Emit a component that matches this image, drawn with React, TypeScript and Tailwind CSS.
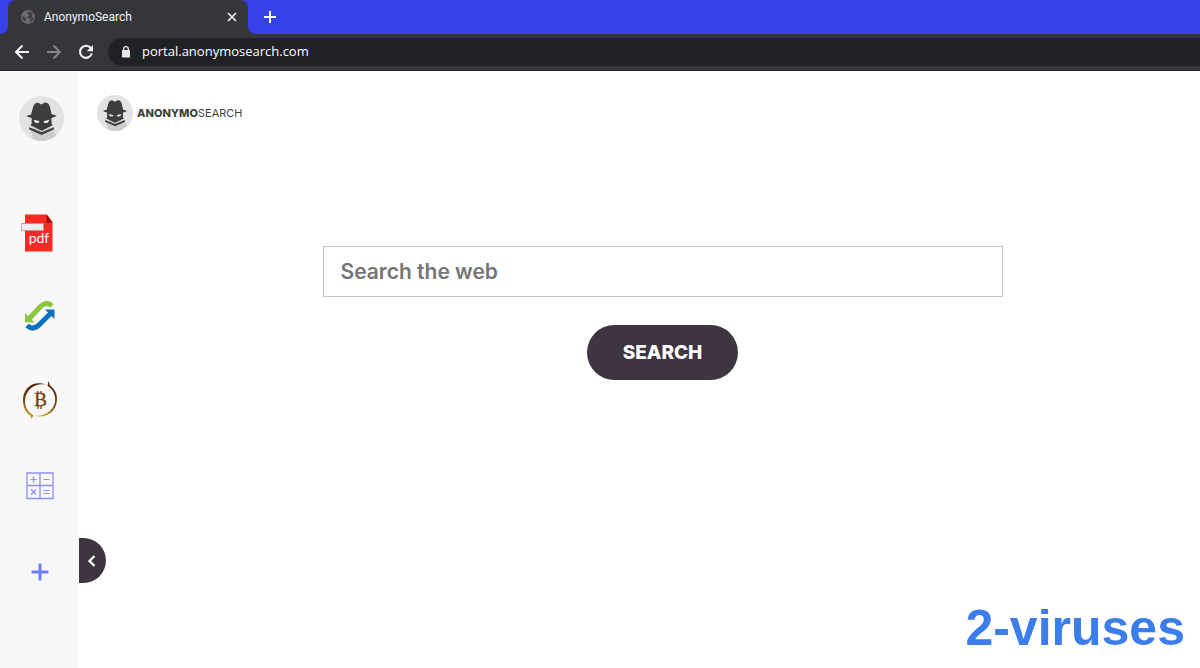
import React from "react";

function Detective({ className }: { className: string }) {
  return (
    <svg viewBox="0 0 135 135" className={className} aria-hidden="true">
      <circle cx="67.5" cy="67.5" r="67.5" fill="#e3e3e3" />
      <path d="M32 97 L103 97 L112 118 A67.5 67.5 0 0 1 42 130 Z" fill="#cccccc" />
      <path
        d="M22 60 Q30 56 36 56 L42 34 Q46 21 54 20 Q60 20 63 23 Q67 26 71 23 Q76 19 83 20 Q90 22 93 34 L98 55 Q106 56 113 60 Q98 69 67 69 Q37 69 22 60 Z"
        fill="#3d3d3d"
      />
      <path d="M38 64 L97 64 L98 84 L101 88 L68 104 L34 88 L38 84 Z" fill="#3d3d3d" />
      <path d="M44 71 L62 76 L58 81 L48 80 Z M91 71 L73 76 L77 81 L87 80 Z" fill="#f4f4f4" />
      <path d="M31 94 L68 109 L104 94 L105 100 L68 117 L30 100 Z" fill="#3d3d3d" />
    </svg>
  );
}

function PdfIcon() {
  return (
    <svg viewBox="0 0 32 38" className="mr-1.5 h-[38px] w-8" aria-hidden="true">
      <path d="M4 0.5 H26 L31.500 8 V37.500 H4 Z" fill="#f82a23" />
      <path d="M25.500 0.500 L31.500 8.500 H25.500 Z" fill="#9c0906" />
      <rect x="0.500" y="9.500" width="22" height="7" fill="#ececec" stroke="#c98c91" strokeWidth="0.800" />
      <text x="18" y="29" textAnchor="middle" fontFamily="Lato, sans-serif" fontSize="14" fill="#ffffff">
        pdf
      </text>
    </svg>
  );
}

function SyncIcon() {
  return (
    <svg viewBox="0 0 30 30" className="h-[30px] w-[30px]" aria-hidden="true">
      <path d="M4 18 L15 6 Q21.500 -0.500 27 5" fill="none" stroke="#8cc63f" strokeWidth="5" />
      <path d="M0 12 V21.500 H9.500 Z" fill="#8cc63f" />
      <path d="M2 24.500 Q8 30 14.500 23.500 L25.500 12.500" fill="none" stroke="#0872c2" strokeWidth="5" />
      <path d="M29.500 8.500 V18 L20 8.500 Z" fill="#0872c2" />
    </svg>
  );
}

function BitcoinIcon() {
  return (
    <svg viewBox="0 0 36 38" className="h-[38px] w-9" aria-hidden="true">
      <defs>
        <linearGradient id="gold" x1="0.600" y1="0" x2="0.300" y2="1">
          <stop offset="0" stopColor="#4a2208" />
          <stop offset="0.600" stopColor="#76410d" />
          <stop offset="1" stopColor="#d7a414" />
        </linearGradient>
      </defs>
      <path
        fill="url(#gold)"
        d="M24 3.500 C10 -1 1 8 1 19 C1 26 4 32 8.500 34.500 L9.500 38 L11.500 34.300 C5 31 2.600 25 3.100 19 C4 9 12 1.500 24 3.500 Z"
      />
      <path
        fill="url(#gold)"
        d="M26.500 0 L28 4.500 C34 9 36 15 34.500 22 C32.500 31 24 38 12 34.500 C24 36 31.500 29 33 21 C34 14 31 8 25.500 5 Z"
      />
      <text x="18.500" y="25" textAnchor="middle" fontFamily="Liberation Serif, serif" fontSize="19" fill="#76400f" stroke="#76400f" strokeWidth="0.400">
        B
      </text>
      <path d="M16 10 V13 M19 10 V13 M16 25 V28 M19 25 V28" stroke="#76400f" strokeWidth="1.300" />
    </svg>
  );
}

function CalculatorIcon() {
  return (
    <svg viewBox="0 0 28 28" className="h-7 w-7" fill="none" stroke="#8990fb" aria-hidden="true">
      <path d="M1 1 H27 V26.500 H1 Z M14 1 V26.500 M1 13.500 H27" strokeWidth="1.300" />
      <path d="M4.500 7.500 H10.500 M7.500 4.500 V10.500 M17.500 7.500 H23.500 M5 17.500 L10 22.500 M10 17.500 L5 22.500 M17.500 18.500 H23.500 M17.500 21.500 H23.500" strokeWidth="1.200" />
    </svg>
  );
}

function BrowserChrome() {
  return (
    <header className="shrink-0 border-b border-[#232125] bg-[#35363a]">
      <div className="flex h-[34px] bg-[#3540e8]">
        <div className="flex w-2 bg-[#35363a]">
          <div className="w-full rounded-br-lg bg-[#3540e8]" />
        </div>
        <div className="flex w-60 items-center rounded-t-lg bg-[#35363a] pr-2.5 pl-3">
          <svg viewBox="0 0 16 16" className="h-4 w-4" aria-hidden="true">
            <circle cx="8" cy="8" r="7" fill="#6b6d71" />
            <path
              d="M8.500 2.500 Q6.500 3.500 7 5 L9 5.500 L9 7 L7 7.500 L7.500 9 L10.500 9.500 L10 12 L8.500 13.500 Q12.500 13 13.800 9.500 L11.500 7.500 L13 5 Q11.500 2.500 8.500 2.500 Z M2 7 L5 8 L6.500 9.500 L5.500 11.500 L5.500 13 Q2 11 2 7 Z"
              fill="#404145"
            />
          </svg>
          <span className="ml-2 flex-1 font-[Roboto,sans-serif] text-xs text-[#f1f3f4]">AnonymoSearch</span>
          <button type="button" aria-label="Close tab" className="flex h-3 w-3 items-center justify-center">
            <svg viewBox="0 0 12 12" className="h-3 w-3" fill="none" stroke="#eeeeee" strokeWidth="1.700" aria-hidden="true">
              <path d="M2 2 L10 10 M10 2 L2 10" />
            </svg>
          </button>
        </div>
        <div className="flex flex-1 bg-[#35363a]">
          <div className="flex w-full items-center rounded-bl-lg bg-[#3540e8] pl-4">
            <button type="button" aria-label="New tab">
              <svg viewBox="0 0 12 12" className="h-3 w-3" stroke="#ffffff" strokeWidth="2" aria-hidden="true">
                <path d="M6 0 V12 M0 6 H12" />
              </svg>
            </button>
          </div>
        </div>
      </div>
      <div className="flex h-9 items-center pl-3.5">
        <div className="flex gap-4">
          <button type="button" aria-label="Back">
            <svg viewBox="0 0 16 16" className="h-4 w-4" fill="none" stroke="#f4f4f4" strokeWidth="2" aria-hidden="true">
              <path d="M15 8 H2.500 M8.500 1.500 L2 8 L8.500 14.500" />
            </svg>
          </button>
          <button type="button" aria-label="Forward">
            <svg viewBox="0 0 16 16" className="h-4 w-4" fill="none" stroke="#85868a" strokeWidth="1.800" aria-hidden="true">
              <path d="M1 8 H13.500 M7.500 1.500 L14 8 L7.500 14.500" />
            </svg>
          </button>
          <button type="button" aria-label="Reload">
            <svg viewBox="0 0 16 16" className="h-4 w-4" aria-hidden="true">
              <path d="M12.700 4 A6 6 0 1 0 13.800 9.500" fill="none" stroke="#f4f4f4" strokeWidth="2.100" />
              <path d="M15 1 V7.200 H8.800 Z" fill="#f4f4f4" />
            </svg>
          </button>
        </div>
        <div className="ml-3.5 flex h-7 flex-1 items-center rounded-l-full bg-[#202124] pl-3.5">
          <svg viewBox="0 0 8 12" className="h-3 w-2" aria-hidden="true">
            <rect x="0" y="4" width="8" height="7.500" rx="0.800" fill="#e8e8e8" />
            <path d="M1.700 5 V3 A2.300 2.300 0 0 1 6.300 3 V5" fill="none" stroke="#e8e8e8" strokeWidth="1.300" />
          </svg>
          <input
            type="text"
            aria-label="Address"
            defaultValue="portal.anonymosearch.com"
            className="ml-3 flex-1 bg-transparent font-['Open_Sans',sans-serif] text-[13px] text-white outline-none"
          />
        </div>
      </div>
    </header>
  );
}

function Sidebar() {
  return (
    <aside className="w-[79px] shrink-0 bg-[#f8f8f8] pt-[25px]">
      <a href="#home" aria-label="Home" className="ml-[19px] block w-[45px]">
        <Detective className="h-[45px] w-[45px]" />
      </a>
      <nav className="mt-[50px] flex flex-col">
        <a href="#pdf" aria-label="PDF tools" className="flex h-21 items-center justify-center">
          <PdfIcon />
        </a>
        <a href="#convert" aria-label="Converter" className="flex h-[82px] items-center justify-center">
          <SyncIcon />
        </a>
        <a href="#bitcoin" aria-label="Bitcoin" className="flex h-[86px] items-center justify-center">
          <BitcoinIcon />
        </a>
        <a href="#calculator" aria-label="Calculator" className="flex h-[86px] items-center justify-center">
          <CalculatorIcon />
        </a>
        <button type="button" aria-label="Add shortcut" className="flex h-[86px] items-center justify-center">
          <svg viewBox="0 0 18 18" className="h-[18px] w-[18px]" stroke="#707dff" strokeWidth="3" aria-hidden="true">
            <path d="M9 0.500 V17.500 M0.500 9 H17.500" />
          </svg>
        </button>
      </nav>
    </aside>
  );
}

export default function App() {
  return (
    <div className="flex min-h-screen flex-col bg-white">
      <BrowserChrome />
      <div className="flex flex-1">
        <Sidebar />
        <main className="relative flex-1 font-[Inter,sans-serif]">
          <a href="#home" className="mt-6 ml-[18px] flex w-fit items-center gap-1 text-[#3f3f3f]">
            <Detective className="h-9 w-9" />
            <span className="text-[11px] leading-4">
              <strong className="font-extrabold">ANONYMO</strong>SEARCH
            </span>
          </a>
          <form
            onSubmit={(event) => event.preventDefault()}
            className="mt-[115px] flex flex-col items-center gap-7 pr-6 pl-[70px]"
          >
            <input
              type="text"
              aria-label="Search the web"
              placeholder="Search the web"
              className="h-[51px] w-full max-w-[680px] border border-[#c4c4c4] px-[17px] text-[21px] font-semibold text-[#757575] outline-none placeholder:text-[#757575]"
            />
            <button type="submit" className="rounded-full bg-[#3e3541] px-9 py-3.5 text-[19px] leading-[27px] font-extrabold text-white">
              SEARCH
            </button>
          </form>
          <button
            type="button"
            aria-label="Collapse sidebar"
            className="absolute top-[467px] left-0 flex h-[45px] w-[27px] items-center rounded-r-full bg-[#3e3541] pl-2"
          >
            <svg viewBox="0 0 9 12" className="h-3 w-[9px]" fill="none" stroke="#ffffff" strokeWidth="2.200" aria-hidden="true">
              <path d="M7.500 1 L2.500 6 L7.500 11" />
            </svg>
          </button>
          <p className="absolute right-[15px] bottom-3 font-['Liberation_Sans',sans-serif] text-[50px] leading-[56px] font-bold text-[#3b7dea]">
            2-viruses
          </p>
        </main>
      </div>
    </div>
  );
}
